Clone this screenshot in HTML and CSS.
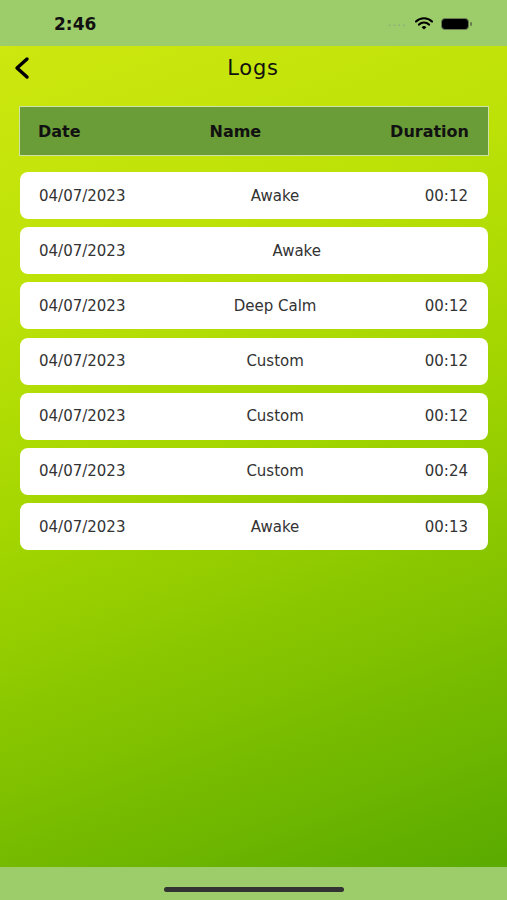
FILE: index.html
```html
<!DOCTYPE html>
<html>
<head>
<link rel="stylesheet" href="styles.css">
</head>
<body>

<div class="screen">
  <div class="status-bar">
    <span class="time">2:46</span>
    <div class="status-icons">
      <span class="signal">....</span>
      <svg class="wifi" width="18" height="13" viewBox="0 0 18 13">
        <path d="M1 4.5 A11.5 11.5 0 0 1 17 4.5" fill="none" stroke="#000" stroke-width="2.2" stroke-linecap="round"/>
        <path d="M4 7.6 A7 7 0 0 1 14 7.6" fill="none" stroke="#000" stroke-width="2.2" stroke-linecap="round"/>
        <path d="M9 12.5 L6.6 10.2 A3.4 3.4 0 0 1 11.4 10.2 Z" fill="#000"/>
      </svg>
      <svg class="battery" width="32" height="12" viewBox="0 0 32 12">
        <rect x="0.5" y="0.5" width="27" height="11" rx="3.5" fill="#000" stroke="#6a7a55"/>
        <rect x="29" y="4" width="2" height="4" rx="1" fill="#6a7a55"/>
      </svg>
    </div>
  </div>

  <div class="main">
    <div class="nav">
      <svg class="back" width="20" height="24" viewBox="0 0 20 24">
        <path d="M15 3 L5 12 L15 21" fill="none" stroke="#000" stroke-width="3.4" stroke-linecap="round" stroke-linejoin="round"/>
      </svg>
      <h1 class="title">Logs</h1>
    </div>

    <div class="table-head">
      <span>Date</span>
      <span>Name</span>
      <span>Duration</span>
    </div>

    <div class="log-list">
      <div class="log-row"><span>04/07/2023</span><span>Awake</span><span>00:12</span></div>
      <div class="log-row"><span>04/07/2023</span><span>Awake</span><span></span></div>
      <div class="log-row"><span>04/07/2023</span><span>Deep Calm</span><span>00:12</span></div>
      <div class="log-row"><span>04/07/2023</span><span>Custom</span><span>00:12</span></div>
      <div class="log-row"><span>04/07/2023</span><span>Custom</span><span>00:12</span></div>
      <div class="log-row"><span>04/07/2023</span><span>Custom</span><span>00:24</span></div>
      <div class="log-row"><span>04/07/2023</span><span>Awake</span><span>00:13</span></div>
    </div>
  </div>

  <div class="home-bar">
    <div class="home-indicator"></div>
  </div>
</div>

</body>
</html>
```

FILE: styles.css
```css
body {
  margin: 0;
  font-family: "DejaVu Sans", sans-serif;
}

.screen {
  width: 507px;
  height: 900px;
  display: flex;
  flex-direction: column;
}

.status-bar {
  height: 46px;
  background-color: #9dcd6a;
  display: flex;
  align-items: center;
  justify-content: space-between;
  padding: 0 34px 0 54px;
}

.time {
  font-weight: bold;
  font-size: 17px;
  color: #111;
  margin-top: 1px;
}

.status-icons {
  display: flex;
  align-items: center;
  gap: 8px;
  margin-top: 1px;
}

.signal {
  color: #8aa87a;
  font-size: 12px;
  letter-spacing: 1px;
  margin-top: -4px;
}

.main {
  flex: 1;
  background: linear-gradient(160deg, #cde70f 0%, #bde208 25%, #a2d500 50%, #7fc000 75%, #5aaa00 100%);
  padding: 0 18px 0 19px;
}

.nav {
  position: relative;
  height: 44px;
  display: flex;
  align-items: center;
  justify-content: center;
}

.back {
  position: absolute;
  left: -7px;
  top: 10px;
}

.title {
  margin: 0 0 0 -2px;
  font-size: 21px;
  font-weight: normal;
  letter-spacing: 0.8px;
  color: #111;
}

.table-head {
  margin-top: 16px;
  height: 48px;
  background-color: #6a9c38;
  border: 1px solid #cfe0a8;
  display: flex;
  align-items: center;
  justify-content: space-between;
  padding: 0 19px 0 18px;
  font-weight: bold;
  font-size: 16px;
  color: #111;
}

.log-list {
  margin-top: 16px;
  padding: 0 1px;
}

.log-row {
  height: 47px;
  margin-bottom: 8.2px;
  background-color: #fff;
  border-radius: 8px;
  display: flex;
  align-items: center;
  justify-content: space-between;
  padding: 0 20px 0 19px;
  font-size: 15px;
  color: #333;
}

.home-bar {
  height: 33px;
  background-color: #9dcd6a;
  display: flex;
  justify-content: center;
  align-items: flex-end;
}

.home-indicator {
  width: 180px;
  height: 5px;
  border-radius: 3px;
  background-color: #333;
  margin-bottom: 8px;
}
```
